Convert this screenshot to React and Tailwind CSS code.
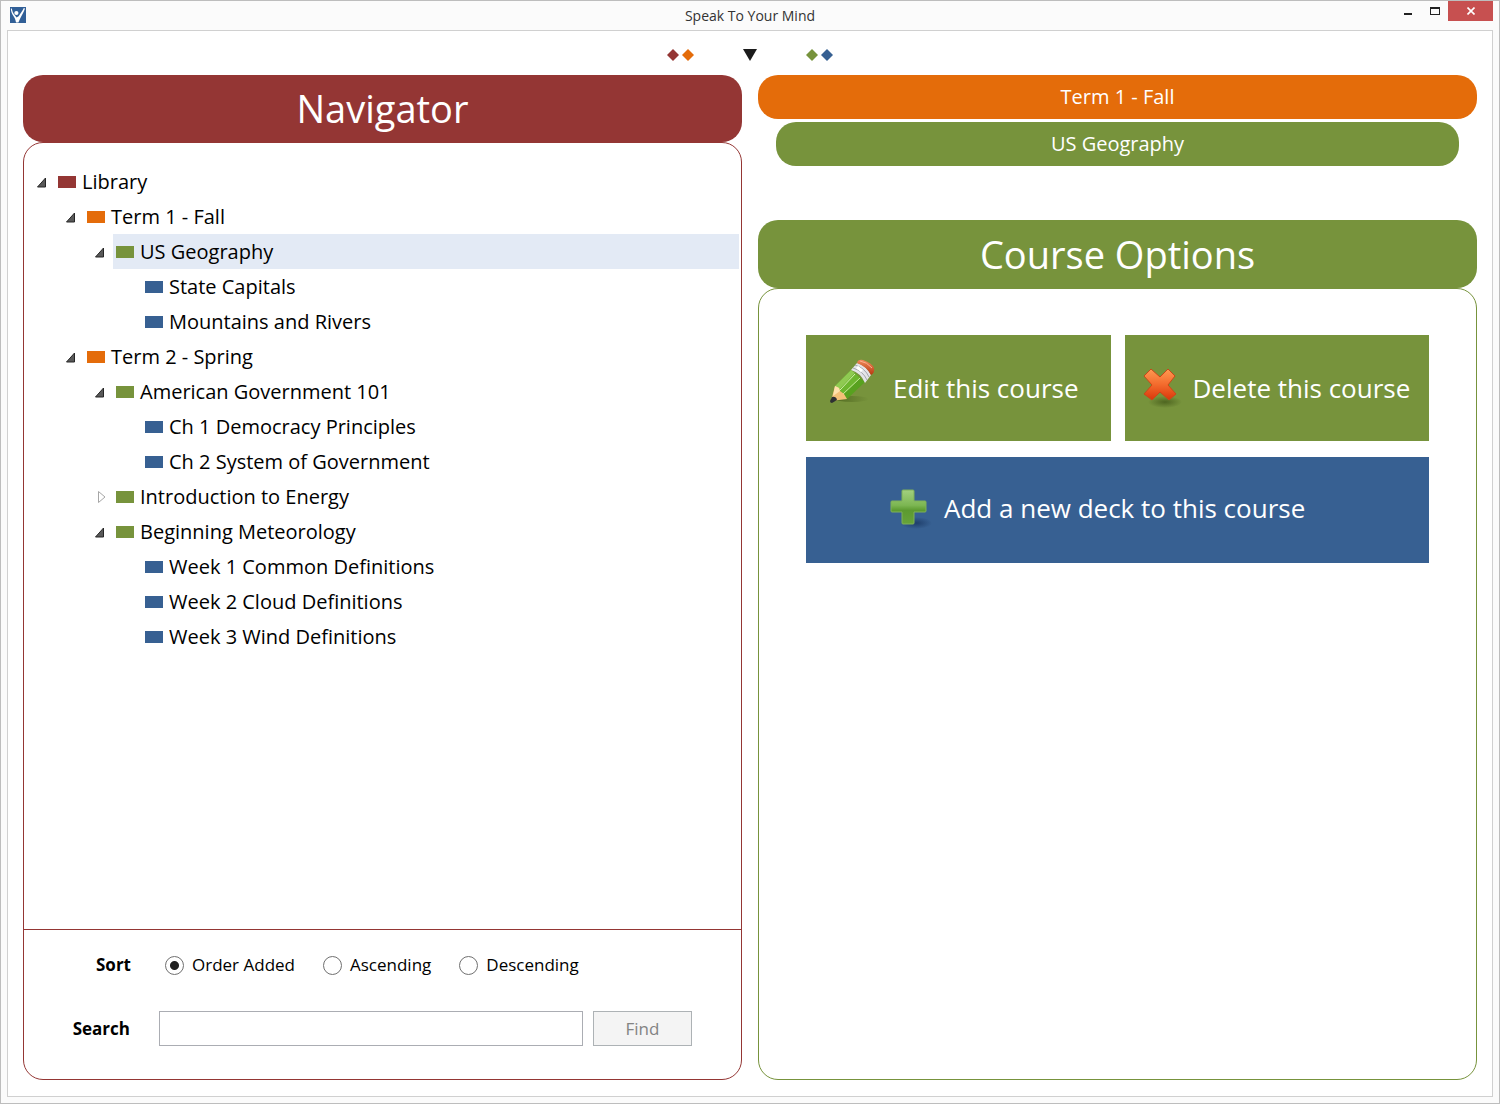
import React, { useState } from 'react';

const SWATCHES = {
    library: 'bg-[#943634]',
    term: 'bg-[#e46c0a]',
    course: 'bg-[#77933c]',
    deck: 'bg-[#376092]',
};

const LIBRARY = {
    name: 'Library',
    type: 'library',
    children: [
        {
            name: 'Term 1 - Fall',
            type: 'term',
            children: [
                {
                    name: 'US Geography',
                    type: 'course',
                    children: [
                        { name: 'State Capitals', type: 'deck' },
                        { name: 'Mountains and Rivers', type: 'deck' },
                    ],
                },
            ],
        },
        {
            name: 'Term 2 - Spring',
            type: 'term',
            children: [
                {
                    name: 'American Government 101',
                    type: 'course',
                    children: [
                        { name: 'Ch 1 Democracy Principles', type: 'deck' },
                        { name: 'Ch 2 System of Government', type: 'deck' },
                    ],
                },
                { name: 'Introduction to Energy', type: 'course', collapsed: true, children: [] },
                {
                    name: 'Beginning Meteorology',
                    type: 'course',
                    children: [
                        { name: 'Week 1 Common Definitions', type: 'deck' },
                        { name: 'Week 2 Cloud Definitions', type: 'deck' },
                        { name: 'Week 3 Wind Definitions', type: 'deck' },
                    ],
                },
            ],
        },
    ],
};

const SORTS = ['Order Added', 'Ascending', 'Descending'];

function AppLogo() {
    return (
        <svg width="16" height="16" viewBox="0 0 16 16" aria-hidden="true">
            <rect width="16" height="16" fill="#315f97" />
            <path d="M0.8 1.6 L1.8 1.6 C2.4 4.6 3 6.2 4.4 7.8 L6.6 10.6 L8.6 9.2 C10.4 6.8 12.4 4 13.8 1 L15 1.4 C13.6 5.4 12 8 10.8 10.2 C10 11.8 9.2 13.6 8.4 15.4 L6 15.4 C5.6 13 4.8 11 3.4 9 C1.8 6.8 1 4.4 0.8 1.6 Z" fill="#fff" />
            <circle cx="6.4" cy="6" r="2.1" fill="#fff" />
        </svg>
    );
}

function Diamond({ className }) {
    return (
        <svg width="12" height="12" viewBox="0 0 12 12" className={className} aria-hidden="true">
            <path d="M6 0 L12 6 L6 12 L0 6 Z" fill="currentColor" />
        </svg>
    );
}

function PencilIcon() {
    return (
        <svg width="48" height="48" viewBox="0 0 48 48" className="mb-3 shrink-0" aria-hidden="true">
            <defs>
                <linearGradient id="pencilShadow">
                    <stop offset="0" stopColor="#3c5212" stopOpacity="0.6" />
                    <stop offset="1" stopColor="#3c5212" stopOpacity="0" />
                </linearGradient>
                <linearGradient id="pencilEraser" x1="0" y1="0" x2="0" y2="1">
                    <stop offset="0" stopColor="#f08a5c" />
                    <stop offset="1" stopColor="#b8380f" />
                </linearGradient>
            </defs>
            <ellipse cx="23" cy="41" rx="17" ry="3" fill="url(#pencilShadow)" />
            <path d="M6 28 L22 12 L36 24 L18 41 Z" fill="#58a11f" />
            <path d="M6 28 L22 12 L26 15 L10 32 Z" fill="#8fca52" />
            <path d="M10 32 L26 15 L31 20 L14 37 Z" fill="#6db62f" />
            <path d="M11 32 L26 16" stroke="#d5f0ac" strokeWidth="1" />
            <path d="M14 36 L31 20" stroke="#c4e898" strokeWidth="1" />
            <path d="M6 28 L2 43 L18 41 L15 36 L11 33 L10 30 Z" fill="#f4c078" />
            <path d="M6 28 L4 38 L11 33 L10 30 Z" fill="#ffe1ac" />
            <path d="M3 39 L1 43 Q1 45 3 45 L8 42 Q7 38 3 39 Z" fill="#2e3033" />
            <path d="M22 12 L28 5 Q37 7 42 17 L36 25 Q32 15 22 12 Z" fill="#e4e4e8" />
            <path d="M24 10 Q34 13 38 22 M26 7 Q36 10 40 19" fill="none" stroke="#a3a5ac" strokeWidth="1" />
            <path d="M28 9 L33 13" stroke="#fff" strokeWidth="3" />
            <path d="M28 5 Q29 1 34 2 Q43 5 45 10 Q46 15 42 17 Q37 8 28 5 Z" fill="url(#pencilEraser)" />
            <path d="M31 3 Q38 4 43 10" fill="none" stroke="#f9b28d" strokeWidth="1" />
        </svg>
    );
}

function CrossIcon() {
    return (
        <svg width="48" height="48" viewBox="0 0 48 48" className="shrink-0" aria-hidden="true">
            <defs>
                <linearGradient id="crossFill" x1="0" y1="0" x2="0" y2="1">
                    <stop offset="0" stopColor="#ff9a52" />
                    <stop offset="0.5" stopColor="#f36b2d" />
                    <stop offset="1" stopColor="#d9360a" />
                </linearGradient>
                <radialGradient id="crossShadow">
                    <stop offset="0" stopColor="#33470e" stopOpacity="0.6" />
                    <stop offset="1" stopColor="#33470e" stopOpacity="0" />
                </radialGradient>
            </defs>
            <ellipse cx="28" cy="38" rx="17" ry="6" fill="url(#crossShadow)" />
            <path
                d="M14 5 L23 13 L31 5 L38 12 L31 21 L39 30 L32 36 L23 28 L15 36 L7 30 L15 21 L7 12 Z"
                fill="url(#crossFill)"
                stroke="#c8481a"
                strokeWidth="1"
                strokeLinejoin="round"
            />
        </svg>
    );
}

function PlusIcon() {
    return (
        <svg width="48" height="48" viewBox="0 0 48 48" className="shrink-0" aria-hidden="true">
            <defs>
                <linearGradient id="plusFill" x1="0" y1="0" x2="0" y2="1">
                    <stop offset="0" stopColor="#a3d080" />
                    <stop offset="0.45" stopColor="#7cb652" />
                    <stop offset="0.6" stopColor="#5c9a30" />
                    <stop offset="1" stopColor="#67a33a" />
                </linearGradient>
                <radialGradient id="plusShadow">
                    <stop offset="0" stopColor="#14305a" stopOpacity="0.7" />
                    <stop offset="1" stopColor="#14305a" stopOpacity="0" />
                </radialGradient>
            </defs>
            <ellipse cx="28" cy="39" rx="16" ry="6" fill="url(#plusShadow)" />
            <path
                d="M15 6 H25 Q26 6 26 7 V17 H37 Q38 17 38 18 V27 Q38 28 37 28 H26 V39 Q26 40 25 40 H15 Q14 40 14 39 V28 H4 Q3 28 3 27 V18 Q3 17 4 17 H14 V7 Q14 6 15 6 Z"
                fill="url(#plusFill)"
                stroke="#7eb058"
                strokeWidth="1"
            />
        </svg>
    );
}

function TreeNode({ node, selected, onSelect }) {
    const [open, setOpen] = useState(!node.collapsed);
    const isSelected = selected === node.name;

    return (
        <li role="treeitem" aria-expanded={node.children ? open : undefined} aria-selected={isSelected}>
            <div className="flex h-[35px] items-center">
                {node.children ? (
                    <button
                        type="button"
                        aria-label={`Toggle ${node.name}`}
                        onClick={() => setOpen(!open)}
                        className="h-full w-[19px] shrink-0"
                    >
                        <svg width="14" height="14" viewBox="0 0 14 14" aria-hidden="true">
                            {open ? (
                                <path d="M9.5 3 V12 H1.5 Z" fill="#595959" stroke="#262626" />
                            ) : (
                                <path d="M4.5 1.5 L11 7 L4.5 12.5 Z" fill="#fff" stroke="#a6a6a6" />
                            )}
                        </svg>
                    </button>
                ) : (
                    <span className="w-[19px] shrink-0" />
                )}
                <button
                    type="button"
                    onClick={() => onSelect(node.name)}
                    className={`flex h-full flex-1 items-center gap-[6px] pl-[3px] text-left ${isSelected ? 'bg-[#e3eaf5]' : ''}`}
                >
                    <span className={`h-3 w-[18px] ${SWATCHES[node.type]}`} />
                    <span>{node.name}</span>
                </button>
            </div>
            {node.children && open && (
                <ul role="group" className="pl-[29px]">
                    {node.children.map((child) => (
                        <TreeNode key={child.name} node={child} selected={selected} onSelect={onSelect} />
                    ))}
                </ul>
            )}
        </li>
    );
}

function TitleBar() {
    return (
        <header className="grid h-[29px] grid-cols-[1fr_auto_1fr]">
            <div className="pt-[6px] pl-[9px]">
                <AppLogo />
            </div>
            <h1 className="text-sm leading-[29px] text-[#333]">Speak To Your Mind</h1>
            <div className="flex items-start justify-end pr-[6px]">
                <button type="button" aria-label="Minimize" className="flex h-5 w-[27px] justify-center pt-3">
                    <span className="h-[2px] w-2 bg-[#222]" />
                </button>
                <button type="button" aria-label="Maximize" className="flex h-5 w-[27px] justify-center pt-[6px]">
                    <span className="h-2 w-[10px] border border-t-2 border-[#222]" />
                </button>
                <button type="button" aria-label="Close" className="flex h-5 w-[45px] items-center justify-center bg-[#c75050]">
                    <svg width="8" height="8" viewBox="0 0 8 8" aria-hidden="true">
                        <path d="M0.5 0.5 L7.5 7.5 M7.5 0.5 L0.5 7.5" stroke="#fff" strokeWidth="1.6" />
                    </svg>
                </button>
            </div>
        </header>
    );
}

function Navigator({ selected, onSelect }) {
    const [sort, setSort] = useState('Order Added');
    const [query, setQuery] = useState('');

    return (
        <section className="flex flex-1 flex-col">
            <h2 className="rounded-[20px] bg-[#943634] text-center text-[38px] leading-[67px] text-white">Navigator</h2>
            <div className="flex flex-1 flex-col rounded-[20px] border border-[#943634]">
                <ul role="tree" className="flex-1 pt-[21px] pr-[2px] pl-3 text-xl text-black">
                    <TreeNode node={LIBRARY} selected={selected} onSelect={onSelect} />
                </ul>

                {/* Sort and search */}
                <form
                    className="border-t border-[#943634] pt-[21px] pb-[33px] text-[17px]"
                    onSubmit={(e) => e.preventDefault()}
                >
                    <fieldset className="flex h-7 items-center">
                        <legend className="float-left w-[107px] text-right font-bold">Sort</legend>
                        <div className="flex gap-7 pl-[34px]">
                            {SORTS.map((name) => (
                                <label key={name} className="flex items-center gap-2">
                                    <input
                                        type="radio"
                                        name="sort"
                                        checked={sort === name}
                                        onChange={() => setSort(name)}
                                        className="size-[19px] appearance-none rounded-full border border-[#707070] bg-white checked:bg-[radial-gradient(circle,#222_4px,transparent_5px)]"
                                    />
                                    {name}
                                </label>
                            ))}
                        </div>
                    </fieldset>
                    <div className="mt-8 flex h-[35px] items-center pr-[49px]">
                        <label htmlFor="search" className="w-[106px] text-right font-bold">Search</label>
                        <input
                            id="search"
                            type="text"
                            value={query}
                            onChange={(e) => setQuery(e.target.value)}
                            className="ml-[29px] h-full min-w-0 flex-1 border border-[#abadb3] bg-white px-2"
                        />
                        <button
                            type="submit"
                            disabled={!query}
                            className="ml-[10px] h-full w-[99px] border border-[#adb2b5] bg-[#f4f4f4] text-[#838383]"
                        >
                            Find
                        </button>
                    </div>
                </form>
            </div>
        </section>
    );
}

function CourseOptions() {
    return (
        <section className="flex flex-1 flex-col text-white">
            <div className="rounded-[20px] bg-[#e46c0a] text-center text-xl leading-[44px]">Term 1 - Fall</div>
            <div className="mx-[18px] mt-[3px] rounded-[20px] bg-[#77933c] text-center text-xl leading-[44px]">
                US Geography
            </div>
            <h2 className="mt-[54px] rounded-[20px] bg-[#77933c] text-center text-[38px] leading-[68px]">
                Course Options
            </h2>
            <div className="flex-1 rounded-[20px] border border-[#77933c] px-[47px] pt-[46px]">
                <div className="grid grid-cols-2 gap-x-[14px] gap-y-4 text-[26px]">
                    <button type="button" className="flex h-[106px] items-center gap-4 bg-[#77933c] pl-[23px]">
                        <PencilIcon />
                        Edit this course
                    </button>
                    <button type="button" className="flex h-[106px] items-center gap-2 bg-[#77933c] pl-3">
                        <CrossIcon />
                        Delete this course
                    </button>
                    <button type="button" className="col-span-2 flex h-[106px] items-center gap-2 bg-[#376092] pb-1 pl-[82px]">
                        <PlusIcon />
                        Add a new deck to this course
                    </button>
                </div>
            </div>
        </section>
    );
}

export default function App() {
    const [selected, setSelected] = useState('US Geography');

    return (
        <div className="flex min-h-screen flex-col border border-[#bdbdbd] bg-[#fbfbfb] font-['Open_Sans','Noto_Sans',sans-serif] text-black">
            <TitleBar />
            <main className="mx-[6px] mb-[6px] flex flex-1 flex-col border border-[#d0d0d0] bg-white px-[15px] pb-4">
                <div className="flex h-11 items-center justify-center gap-[49px] pt-1">
                    <div className="flex gap-[3px]">
                        <Diamond className="text-[#943634]" />
                        <Diamond className="text-[#e46c0a]" />
                    </div>
                    <button type="button" aria-label="Show menu">
                        <svg width="14" height="12" viewBox="0 0 14 12" aria-hidden="true">
                            <path d="M0 0 H14 L7 12 Z" fill="#1c1c1c" />
                        </svg>
                    </button>
                    <div className="flex gap-[3px]">
                        <Diamond className="text-[#77933c]" />
                        <Diamond className="text-[#376092]" />
                    </div>
                </div>
                <div className="flex flex-1 gap-4">
                    <Navigator selected={selected} onSelect={setSelected} />
                    <CourseOptions />
                </div>
            </main>
        </div>
    );
}
